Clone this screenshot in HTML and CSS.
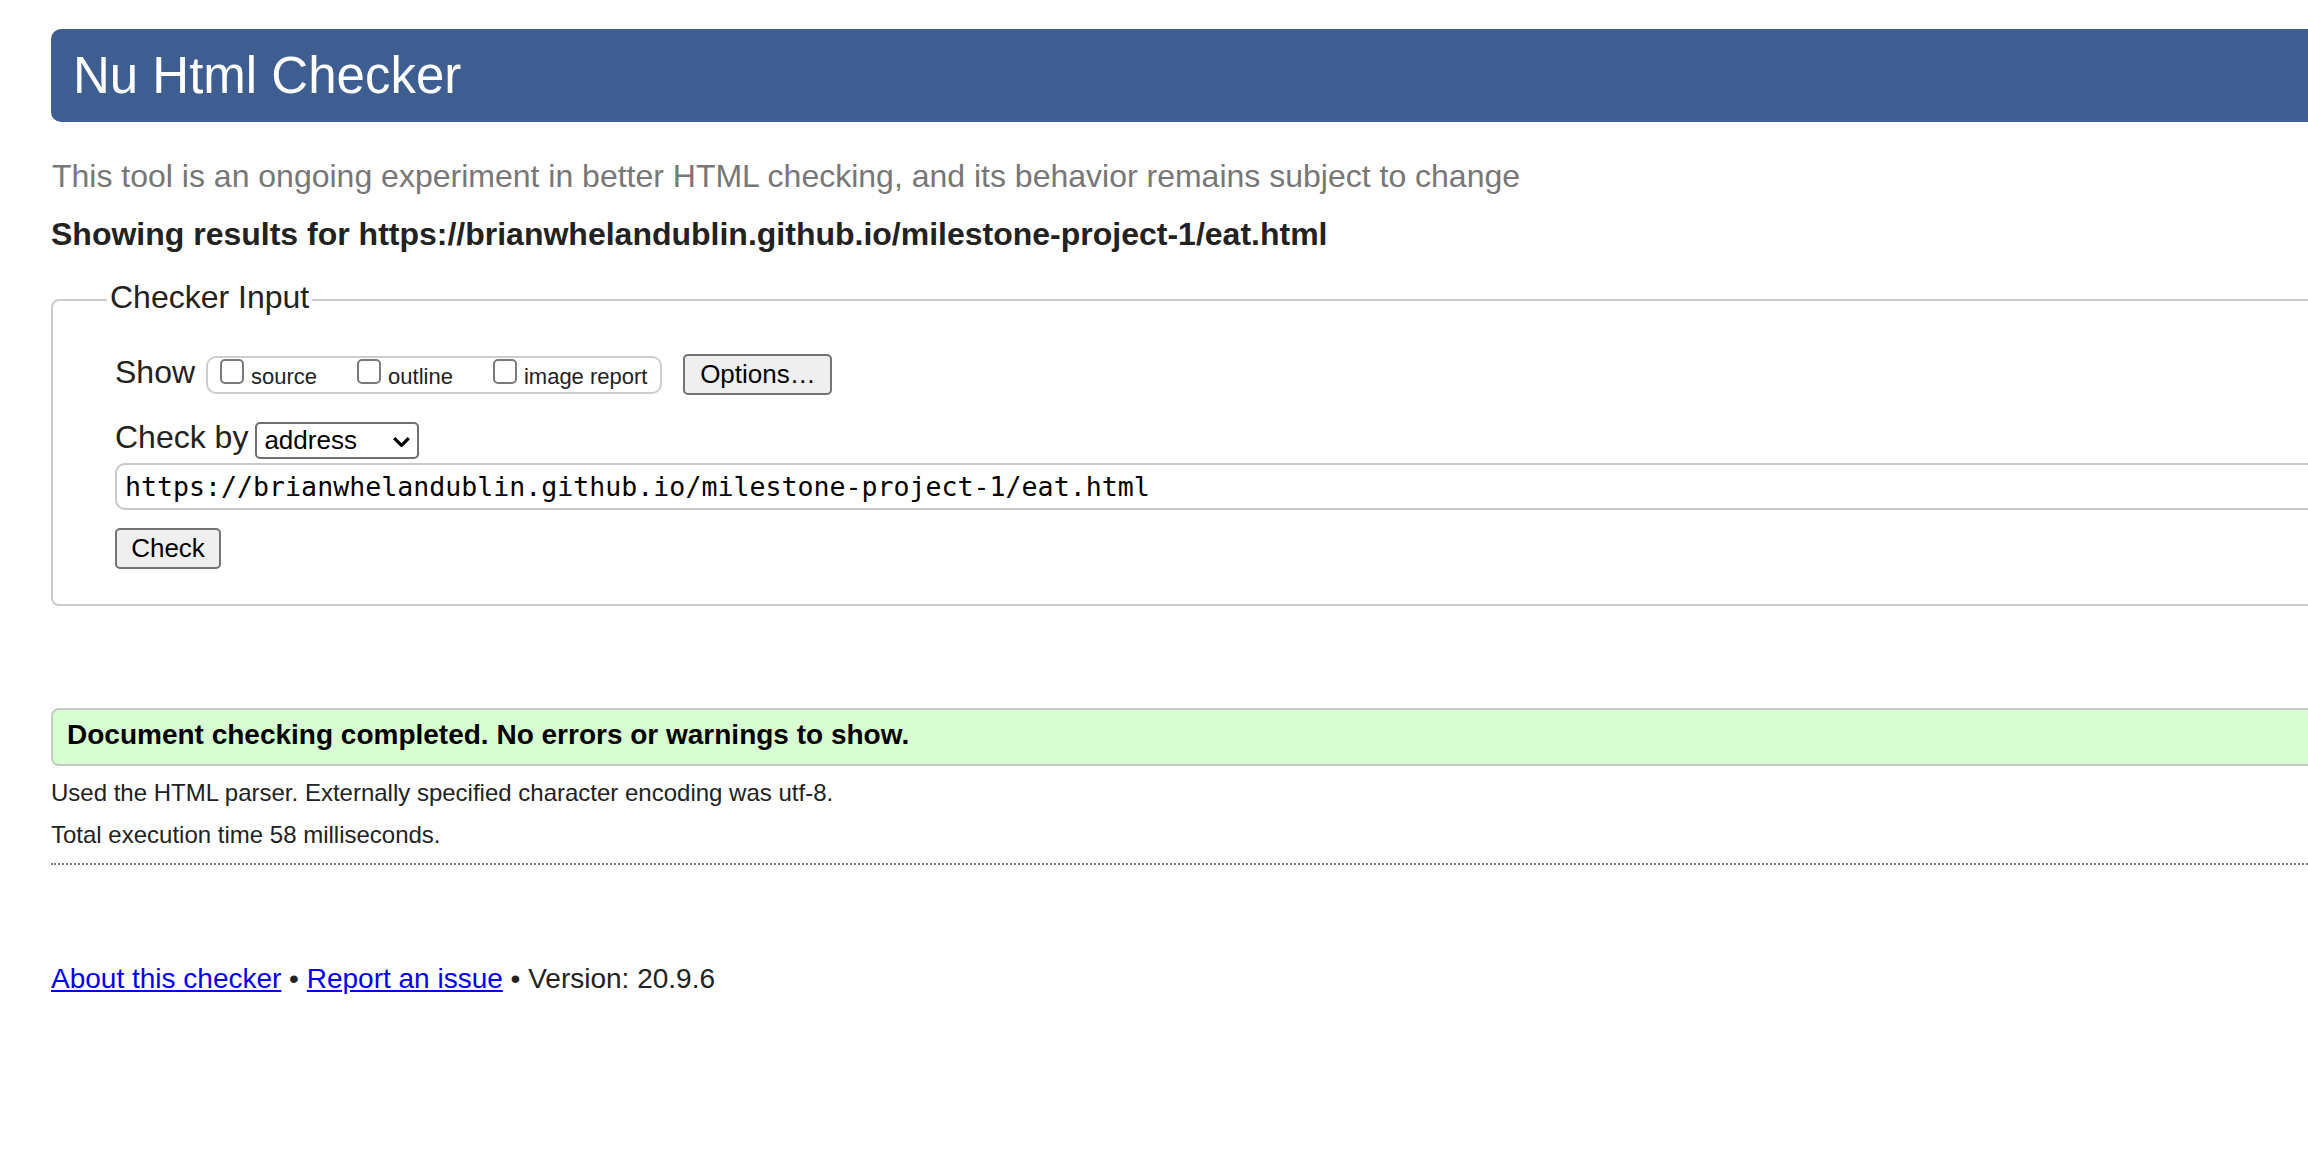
FILE: index.html
```html
<!DOCTYPE html>
<html lang="en">
<head>
<meta charset="utf-8">
<title>Showing results for https://brianwhelandublin.github.io/milestone-project-1/eat.html - Nu Html Checker</title>
<link rel="stylesheet" href="styles.css">
</head>
<body>
<div class="page">
  <h1 class="title">Nu Html Checker</h1>
  <p class="intro">This tool is an ongoing experiment in better HTML checking, and its behavior remains subject to change</p>
  <h2 class="results-for">Showing results for https://brianwhelandublin.github.io/milestone-project-1/eat.html</h2>

  <form class="checker" action="#">
    <fieldset class="input-box">
      <legend class="legend">Checker Input</legend>

      <div class="row row-show">
        <span class="row-label">Show</span>
        <div class="show-group">
          <label class="opt"><input type="checkbox" class="cb"><span class="opt-text">source</span></label>
          <label class="opt"><input type="checkbox" class="cb"><span class="opt-text">outline</span></label>
          <label class="opt"><input type="checkbox" class="cb"><span class="opt-text">image report</span></label>
        </div>
        <button type="button" class="btn btn-options">Options…</button>
      </div>

      <div class="row row-by">
        <span class="row-label">Check by</span>
        <div class="select" role="listbox">
          <span class="select-text">address</span>
          <svg class="chevron" width="19" height="12" viewBox="0 0 19 12" aria-hidden="true">
            <polyline points="2.2,2.2 9.5,9.4 16.8,2.2" fill="none" stroke="#000" stroke-width="3.3" stroke-linejoin="round"/>
          </svg>
        </div>
      </div>

      <input class="url" type="text" value="https://brianwhelandublin.github.io/milestone-project-1/eat.html">

      <div class="row-submit">
        <button type="button" class="btn btn-check">Check</button>
      </div>
    </fieldset>
  </form>

  <section class="results">
    <p class="success">Document checking completed. No errors or warnings to show.</p>
    <p class="meta">Used the HTML parser. Externally specified character encoding was utf-8.</p>
    <p class="meta meta-second">Total execution time 58 milliseconds.</p>
  </section>

  <p class="footer"><a href="#" class="link">About this checker</a> • <a href="#" class="link">Report an issue</a> • Version: 20.9.6</p>
</div>
</body>
</html>
```

FILE: styles.css
```css
html {
  overflow: hidden;
}

body {
  margin: 0;
  background: #fff;
  color: #222;
  font-family: "Liberation Sans", Arial, Helvetica, sans-serif;
}

.page {
  width: 2600px;
  padding: 29px 0 0 51px;
}

.title {
  margin: 0;
  height: 93px;
  padding-left: 22px;
  line-height: 93px;
  font-size: 51px;
  font-weight: normal;
  color: #fff;
  background: #3e5e92;
  border-radius: 10px;
}

.intro {
  margin: 34px 0 0 1px;
  font-size: 32px;
  line-height: 40px;
  color: #777;
}

.results-for {
  margin: 18px 0 0;
  font-size: 32px;
  line-height: 40px;
  font-weight: bold;
  color: #222;
}

.checker {
  margin: 0;
}

.input-box {
  margin: 23px 0 0;
  padding: 29px 0 35px 62px;
  border: 2px solid #cbcbcb;
  border-radius: 8px;
  min-width: 0;
}

.legend {
  margin-left: -8px;
  padding: 0 3px 6px;
  font-size: 32px;
  line-height: 40px;
  color: #222;
}

.row {
  display: flex;
  align-items: flex-start;
}

.row-label {
  font-size: 32px;
  line-height: 40px;
  color: #222;
}

.row-show .row-label {
  margin-right: 11px;
}

.show-group {
  display: flex;
  align-items: flex-start;
  gap: 40px;
  box-sizing: border-box;
  height: 38px;
  margin-top: 4px;
  padding: 1px 13px 0 12px;
  border: 2px solid #cdcdcd;
  border-radius: 10px;
}

.opt {
  display: flex;
  align-items: flex-start;
}

.cb {
  appearance: none;
  -webkit-appearance: none;
  box-sizing: border-box;
  width: 24px;
  height: 25px;
  margin: 0 7px 0 0;
  border: 2px solid #7a7a7a;
  border-radius: 5px;
  background: #fff;
}

.opt-text {
  font-size: 22px;
  line-height: 35px;
  color: #222;
}

.btn {
  box-sizing: border-box;
  height: 41px;
  padding: 0;
  border: 2px solid #737373;
  border-radius: 5px;
  background: #efefef;
  color: #000;
  font-family: "Liberation Sans", Arial, Helvetica, sans-serif;
  font-size: 26px;
  line-height: 37px;
  text-align: center;
}

.btn-options {
  width: 149px;
  margin: 2px 0 0 21px;
}

.row-by {
  margin-top: 17px;
}

.row-by .row-label {
  margin: 7px 7px 0 0;
  line-height: 36px;
}

.select {
  display: flex;
  align-items: center;
  justify-content: space-between;
  box-sizing: border-box;
  width: 164px;
  height: 37px;
  margin-top: 10px;
  padding: 0 6px 0 7px;
  border: 2px solid #6f6f6f;
  border-radius: 5px;
  background: #fff;
}

.select-text {
  font-size: 26px;
  line-height: 33px;
  color: #000;
}

.chevron {
  display: block;
  margin-top: 2px;
}

.url {
  display: block;
  box-sizing: border-box;
  width: 2400px;
  height: 47px;
  margin: 4px 0 0;
  padding: 0 8px;
  border: 2px solid #cacaca;
  border-radius: 10px;
  background: #fff;
  color: #000;
  font-family: "DejaVu Sans Mono", Menlo, monospace;
  font-size: 26.6px;
  outline: none;
}

.row-submit {
  margin-top: 18px;
}

.btn-check {
  width: 106px;
}

.results {
  padding-bottom: 12px;
  border-bottom: 2px dotted #777;
}

.success {
  margin: 102px 0 0;
  padding: 8px 14px 12px;
  border: 2px solid #c8c8c8;
  border-radius: 8px;
  background: #d8fcd1;
  color: #000;
  font-size: 28px;
  line-height: 34px;
  font-weight: bold;
}

.meta {
  margin: 11px 0 0;
  font-size: 24px;
  line-height: 32px;
  color: #222;
}

.meta-second {
  margin-top: 10px;
}

.footer {
  margin: 96px 0 0;
  font-size: 28px;
  line-height: 36px;
  color: #222;
}

.link {
  color: #0000ee;
  text-decoration: underline;
}
```
